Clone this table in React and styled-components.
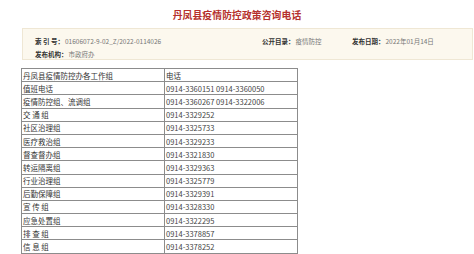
import React from "react";
import styled, { createGlobalStyle } from "styled-components";

const Global = createGlobalStyle`
  html, body { margin: 0; padding: 0; background: #fff; }
  body { font-family: "Noto Sans CJK SC", "Noto Sans", sans-serif; }
`;

const Page = styled.div`
  width: 474px;
  height: 254px;
  overflow: hidden;
  display: flex;
  flex-direction: column;
`;

const Title = styled.h1`
  margin: 0;
  height: 28px;
  display: flex;
  align-items: center;
  justify-content: center;
  padding-top: 1px;
  box-sizing: border-box;
  font-family: "Noto Sans CJK SC", serif;
  font-size: 9.8px;
  font-weight: 700;
  color: #b5302c;
  letter-spacing: 0.1px;
`;

const InfoBox = styled.div`
  margin: 0 1px 0 22px;
  height: 32px;
  box-sizing: border-box;
  background: #fcf8ee;
  border: 1px solid #efe7d4;
  padding: 5px 0 0 12px;
  display: grid;
  grid-template-columns: 227px 90px 1fr;
  grid-auto-rows: 13px;
  align-items: center;
`;

const Field = styled.div`
  font-size: 6.5px;
  white-space: nowrap;
  color: #777;
`;

const Label = styled.span`
  font-weight: 700;
  color: #333;
  margin-right: 1px;
`;

const Table = styled.table`
  margin: 8px 0 0 21px;
  width: 277px;
  border-collapse: collapse;
  font-size: 7.5px;
  color: #333;
  table-layout: fixed;
`;

const Row = styled.tr`
  height: 13.2px;
`;

const Cell = styled.td`
  border: 1px solid #8c8c8c;
  border-top: ${(p) => (p.$strong ? "1.5px solid #333" : "1px solid #8c8c8c")};
  padding: 0 0 0 1px;
  line-height: 11px;
  white-space: nowrap;
  overflow: hidden;
  vertical-align: middle;
  width: ${(p) => p.$w || "auto"};
  color: ${(p) => (p.$num ? "#444" : "#333")};
`;

const rows = [
  ["值班电话", "0914-3360151 0914-3360050"],
  ["疫情防控组、流调组", "0914-3360267 0914-3322006"],
  ["交 通 组", "0914-3329252"],
  ["社区治理组", "0914-3325733"],
  ["医疗救治组", "0914-3329233"],
  ["督查督办组", "0914-3321830"],
  ["转运隔离组", "0914-3329363"],
  ["行业治理组", "0914-3325779"],
  ["后勤保障组", "0914-3329391"],
  ["宣 传 组", "0914-3328330", true],
  ["应急处置组", "0914-3322295"],
  ["排 查 组", "0914-3378857"],
  ["信 息 组", "0914-3378252"],
];

export default function App() {
  return (
    <Page>
      <Global />
      <Title>丹凤县疫情防控政策咨询电话</Title>
      <InfoBox>
        <Field>
          <Label>索 引 号：</Label>01606072-9-02_Z/2022-0114026
        </Field>
        <Field>
          <Label>公开目录：</Label>疫情防控
        </Field>
        <Field>
          <Label>发布日期：</Label>2022年01月14日
        </Field>
        <Field>
          <Label>发布机构：</Label>市政府办
        </Field>
      </InfoBox>
      <Table>
        <tbody>
          <Row>
            <Cell $w="141px">丹凤县疫情防控办各工作组</Cell>
            <Cell>电话</Cell>
          </Row>
          {rows.map(([name, phone, strong]) => (
            <Row key={name}>
              <Cell $strong={strong}>{name}</Cell>
              <Cell $strong={strong} $num>
                {phone}
              </Cell>
            </Row>
          ))}
        </tbody>
      </Table>
    </Page>
  );
}
